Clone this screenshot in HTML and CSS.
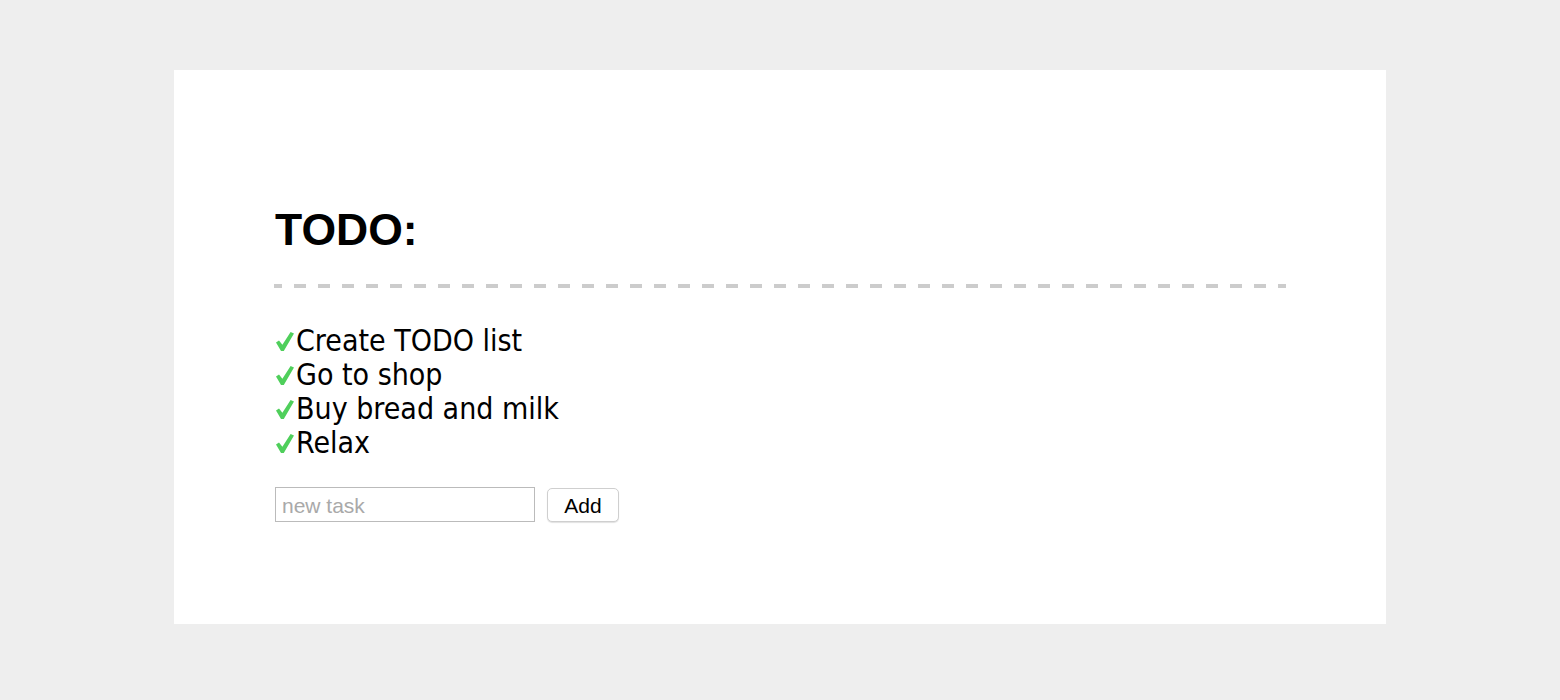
FILE: index.html
```html
<!DOCTYPE html>
<html lang="en">
<head>
<meta charset="utf-8">
<title>TODO</title>
<link rel="stylesheet" href="styles.css">
</head>
<body>
  <main class="card">
    <h1 class="title">TODO:</h1>
    <div class="divider"></div>
    <ul class="tasks">
      <li class="task"><span class="check"><svg viewBox="0 0 18 19" width="18" height="19" aria-hidden="true"><polygon points="0,10.6 3,8.4 6.4,12.8 14.6,0 18,1.6 7.8,18.9 5,18.9"/></svg></span>Create TODO list</li>
      <li class="task"><span class="check"><svg viewBox="0 0 18 19" width="18" height="19" aria-hidden="true"><polygon points="0,10.6 3,8.4 6.4,12.8 14.6,0 18,1.6 7.8,18.9 5,18.9"/></svg></span>Go to shop</li>
      <li class="task"><span class="check"><svg viewBox="0 0 18 19" width="18" height="19" aria-hidden="true"><polygon points="0,10.6 3,8.4 6.4,12.8 14.6,0 18,1.6 7.8,18.9 5,18.9"/></svg></span>Buy bread and milk</li>
      <li class="task"><span class="check"><svg viewBox="0 0 18 19" width="18" height="19" aria-hidden="true"><polygon points="0,10.6 3,8.4 6.4,12.8 14.6,0 18,1.6 7.8,18.9 5,18.9"/></svg></span>Relax</li>
    </ul>
    <form class="add-form">
      <input class="add-input" type="text" placeholder="new task">
      <button class="add-button" type="button">Add</button>
    </form>
  </main>
</body>
</html>
```
FILE: styles.css
```css
html, body {
  margin: 0;
  padding: 0;
}
body {
  background: #eeeeee;
  font-family: "Liberation Sans", Arial, sans-serif;
  color: #000;
}
.card {
  width: 1012px;
  margin: 70px auto 0;
  padding: 138px 100px 102px;
  background: #ffffff;
}
.title {
  margin: 0 0 0 1px;
  font-size: 44.5px;
  line-height: 44px;
  font-weight: bold;
}
.divider {
  margin-top: 32px;
  height: 4px;
  background-image: linear-gradient(to right, #cccccc 0 12px, transparent 12px 24px);
  background-size: 24px 4px;
  background-position: -4px 0;
  background-repeat: repeat-x;
}
.tasks {
  list-style: none;
  margin: 36px 0 0;
  padding: 0;
  font-family: "DejaVu Sans Condensed", "DejaVu Sans", sans-serif;
  font-stretch: condensed;
  font-size: 30px;
  line-height: 34px;
}
.task {
  display: flex;
}
.check {
  display: block;
  width: 22px;
  padding: 8px 0 0 2px;
  box-sizing: border-box;
  fill: #4fcf5b;
}
.check svg {
  display: block;
}
.add-form {
  display: flex;
  align-items: flex-start;
  margin: 27px 0 0 1px;
}
.add-input {
  box-sizing: border-box;
  width: 260px;
  height: 35px;
  margin: 0;
  padding: 2px 6px 0;
  border: 1px solid #bbbbbb;
  border-radius: 0;
  font-family: "Liberation Sans", Arial, sans-serif;
  font-size: 21px;
  color: #000;
  outline: none;
}
.add-input::placeholder {
  color: #a9a9a9;
}
.add-button {
  box-sizing: border-box;
  width: 72px;
  height: 34px;
  margin: 1px 0 0 12px;
  padding: 1px 0 0;
  border: 1px solid #cfcfcf;
  border-radius: 5px;
  background: #ffffff;
  box-shadow: 0 1px 1px rgba(0, 0, 0, 0.12);
  font-family: "Liberation Sans", Arial, sans-serif;
  font-size: 21px;
  color: #000;
}
```
